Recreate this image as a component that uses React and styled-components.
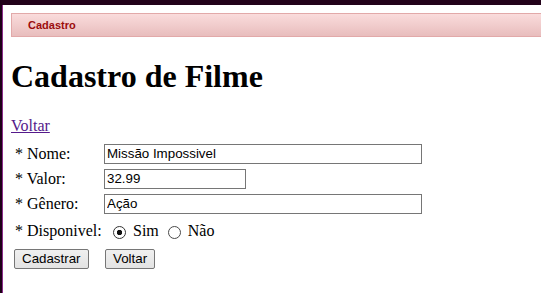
import React from "react";
import styled, { createGlobalStyle } from "styled-components";

const Global = createGlobalStyle`
  html, body { margin: 0; padding: 0; background: #fff; }
  body { font-family: "Liberation Serif", "Times New Roman", serif; font-size: 16px; color: #000; }
`;

const Frame = styled.div`
  box-sizing: border-box;
  min-height: 293px;
  border-top: 5px solid #22021a;
  border-left: 2px solid #1e0118;
  box-shadow: inset 1px 0 0 #8a2c8a;
  padding: 8px 8px 8px 9px;
  overflow: hidden;
`;

const Banner = styled.div`
  box-sizing: border-box;
  height: 24px;
  margin-right: -30px;
  border: 1px solid #e2a9a9;
  background: linear-gradient(#fadcdc, #e8bdbd);
  display: flex;
  align-items: center;
  padding-left: 16px;
  font-family: "Liberation Sans", Arial, sans-serif;
  font-size: 11px;
  font-weight: bold;
  color: #9c0d0d;
`;

const Title = styled.h1`
  font-size: 32px;
  font-weight: bold;
  margin: 21.44px 0;
  line-height: normal;
`;

const BackLink = styled.a`
  color: #551a8b;
  text-decoration: underline;
  cursor: pointer;
`;

const Form = styled.form`
  display: grid;
  grid-template-columns: 90px 1fr;
  grid-template-rows: 20px 20px 20px 25px 20px;
  row-gap: 5px;
  align-items: center;
  margin: 9px 0 0 3px;
`;

const Label = styled.span`
  padding-left: 1px;
  white-space: nowrap;
`;

const TextInput = styled.input`
  box-sizing: border-box;
  width: ${(p) => p.$w}px;
  height: 20px;
  margin: 0;
  border: 1px solid #767676;
  padding: 1px 2px;
  font-family: "Liberation Sans", Arial, sans-serif;
  font-size: 13.33px;
  color: #000;
  background: #fff;
  outline: none;
`;

const RadioGroup = styled.div`
  display: flex;
  align-items: center;
  padding-left: 9px;
`;

const Radio = styled.input`
  appearance: none;
  -webkit-appearance: none;
  box-sizing: border-box;
  width: 13px;
  height: 13px;
  margin: 2px 7px 0 ${(p) => p.$ml}px;
  border-radius: 50%;
  border: 1px solid #4a4a4a;
  background: #fff;
  &:checked {
    border-color: #333;
    background: radial-gradient(circle, #111 0 2.4px, #fff 3px);
  }
`;

const Button = styled.button`
  box-sizing: border-box;
  height: 20px;
  margin: 0 0 0 ${(p) => p.$ml || 0}px;
  padding: 1px 7px;
  border: 1px solid #767676;
  border-radius: 2px;
  background: linear-gradient(#f0f0f0, #e3e3e3);
  font-family: "Liberation Sans", Arial, sans-serif;
  font-size: 13.33px;
  color: #000;
  justify-self: start;
`;

export default function App() {
  return (
    <>
      <Global />
      <Frame>
        <Banner>Cadastro</Banner>
        <Title>Cadastro de Filme</Title>
        <div>
          <BackLink>Voltar</BackLink>
        </div>
        <Form onSubmit={(e) => e.preventDefault()}>
          <Label>* Nome:</Label>
          <TextInput $w={318} defaultValue="Missão Impossivel" />
          <Label>* Valor:</Label>
          <TextInput $w={142} defaultValue="32.99" />
          <Label>* Gênero:</Label>
          <TextInput $w={318} defaultValue="Ação" />
          <Label>* Disponivel:</Label>
          <RadioGroup>
            <Radio type="radio" name="disp" defaultChecked $ml={0} />
            Sim
            <Radio type="radio" name="disp" $ml={9} />
            Não
          </RadioGroup>
          <Button type="button">Cadastrar</Button>
          <Button type="button" $ml={1}>Voltar</Button>
        </Form>
      </Frame>
    </>
  );
}
